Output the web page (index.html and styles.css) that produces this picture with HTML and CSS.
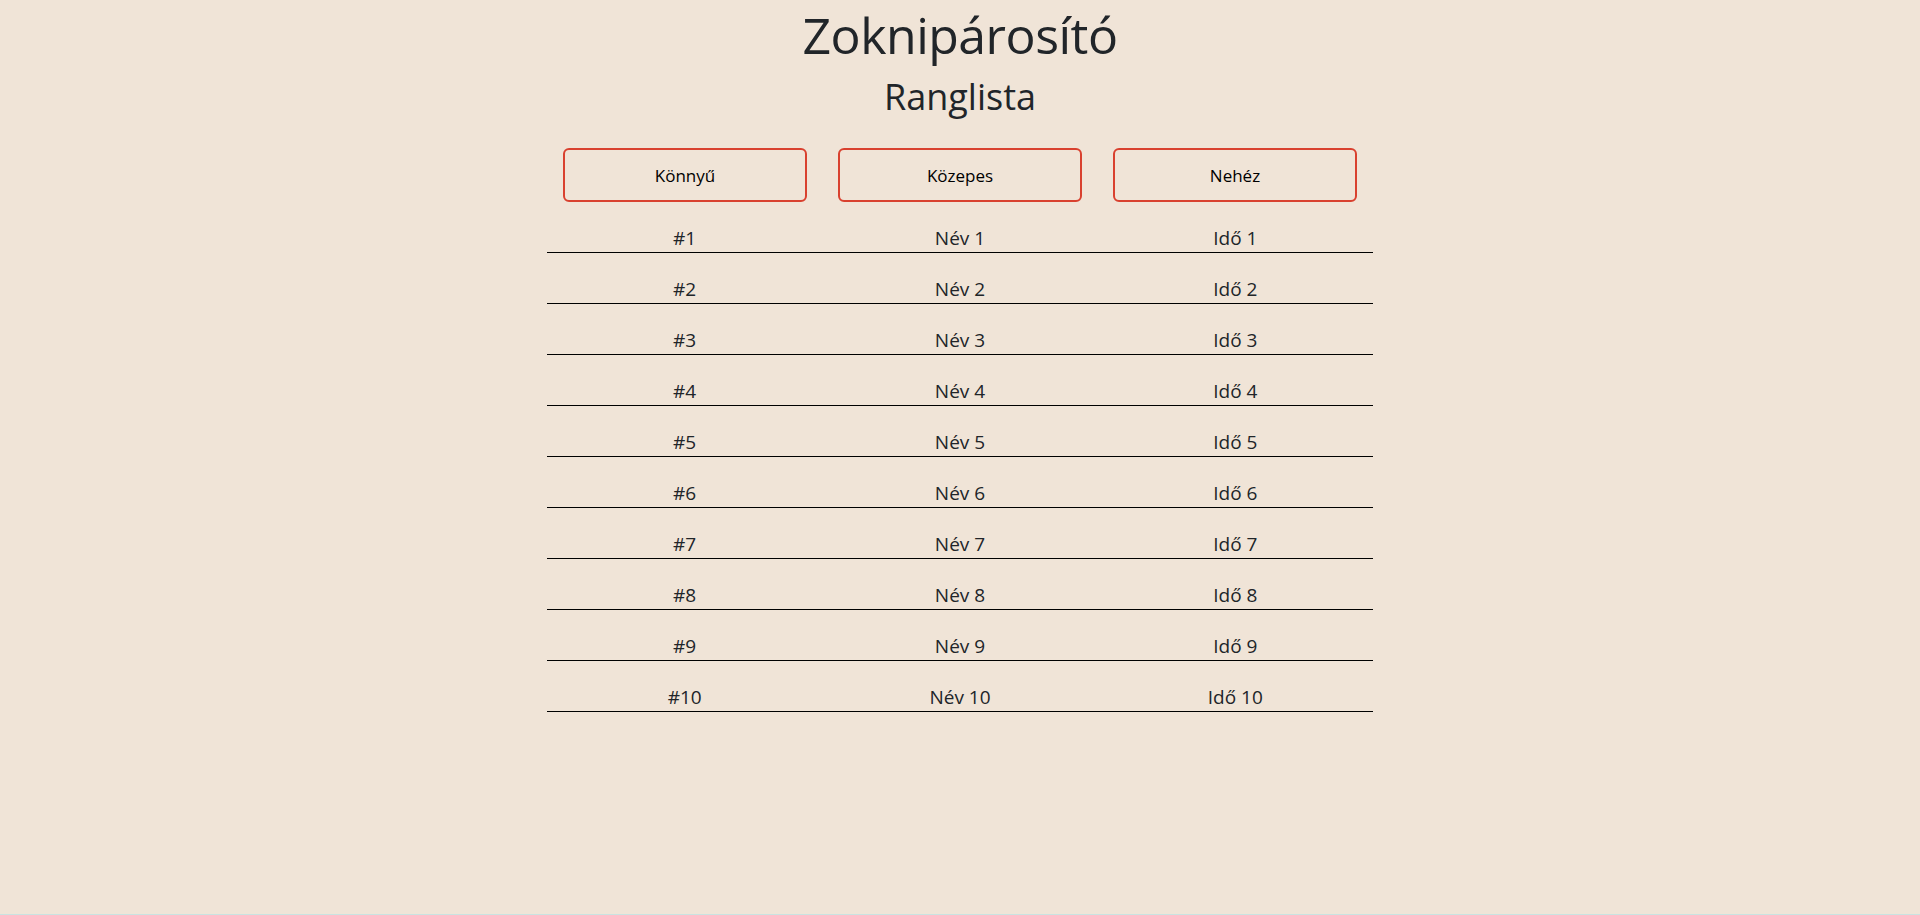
FILE: index.html
```html
<!DOCTYPE html>
<html lang="hu">
<head>
<meta charset="utf-8">
<title>Zoknipárosító – Ranglista</title>
<link rel="stylesheet" href="styles.css">
</head>
<body>
<main class="page">
  <h1 class="title">Zoknipárosító</h1>
  <h2 class="subtitle">Ranglista</h2>
  <section class="board">
    <div class="tabs">
      <button class="tab">Könnyű</button>
      <button class="tab">Közepes</button>
      <button class="tab">Nehéz</button>
    </div>
    <div class="rows">
      <div class="row"><span>#1</span><span>Név 1</span><span>Idő 1</span></div>
      <div class="row"><span>#2</span><span>Név 2</span><span>Idő 2</span></div>
      <div class="row"><span>#3</span><span>Név 3</span><span>Idő 3</span></div>
      <div class="row"><span>#4</span><span>Név 4</span><span>Idő 4</span></div>
      <div class="row"><span>#5</span><span>Név 5</span><span>Idő 5</span></div>
      <div class="row"><span>#6</span><span>Név 6</span><span>Idő 6</span></div>
      <div class="row"><span>#7</span><span>Név 7</span><span>Idő 7</span></div>
      <div class="row"><span>#8</span><span>Név 8</span><span>Idő 8</span></div>
      <div class="row"><span>#9</span><span>Név 9</span><span>Idő 9</span></div>
      <div class="row"><span>#10</span><span>Név 10</span><span>Idő 10</span></div>
    </div>
  </section>
</main>
</body>
</html>
```

FILE: styles.css
```css
html {
  background: #c9e3e1;
  height: 100%;
}

body {
  margin: 0;
  min-height: 914px;
  background: #f0e4d7;
  color: #212529;
  font-family: "Comic Sans MS", "Open Sans", "DejaVu Sans", sans-serif;
}

.page {
  display: flex;
  flex-direction: column;
  align-items: center;
  text-align: center;
}

.title {
  margin: 0;
  font-size: 50px;
  font-weight: 400;
  line-height: 70px;
  letter-spacing: -0.5px;
}

.subtitle {
  margin: 3px 0 0;
  font-size: 36px;
  font-weight: 400;
  line-height: 48px;
}

.board {
  width: 826px;
  margin-top: 27px;
}

.tabs {
  display: grid;
  grid-template-columns: repeat(3, 1fr);
  column-gap: 31px;
  padding: 0 16px;
}

.tab {
  height: 54px;
  background: transparent;
  border: 2px solid #d9412f;
  border-radius: 6px;
  color: #000;
  font-family: inherit;
  font-size: 17px;
  font-weight: 500;
  cursor: pointer;
}

.rows {
  display: flex;
  flex-direction: column;
}

.row {
  display: grid;
  grid-template-columns: repeat(3, 1fr);
  height: 51px;
  box-sizing: border-box;
  padding-top: 24px;
  border-bottom: 1px solid #000;
  font-size: 19px;
  font-weight: 500;
  line-height: 24px;
}
```
